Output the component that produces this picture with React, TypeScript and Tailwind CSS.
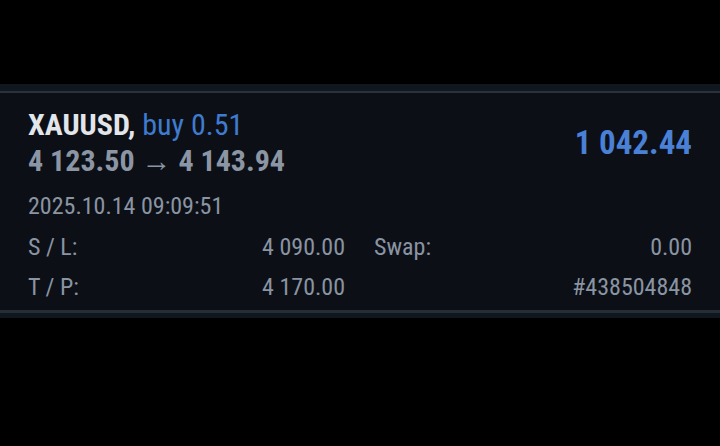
const font = "font-['Roboto_Condensed',Roboto,sans-serif]";

function Field({ label, value }: { label: string; value: string }) {
  return (
    <div className="flex justify-between">
      <span className="text-[#8a94a3]">{label}</span>
      <span className="text-[#8a94a3]">{value}</span>
    </div>
  );
}

export default function App() {
  return (
    <div className={`h-[446px] w-[720px] bg-black ${font}`}>
      <div className="h-[84px]" />
      <div className="h-[7px] bg-[#11171e]" />
      <div className="h-[2px] bg-[#2a323c]" />

      <div className="bg-[#0c1016] pl-[28px] pr-[28px] pt-[14px] pb-[8px]">
        <div className="flex items-center justify-between">
          <div className="font-bold text-[30px] leading-[36px]">
            <div>
              <span className="text-[#e2e5ea]">XAUUSD, </span>
              <span className="font-normal text-[#3f7bd0]">buy 0.51</span>
            </div>
            <div className="text-[#8b95a4]">4 123.50 → 4 143.94</div>
          </div>
          <div className="font-bold text-[33px] leading-[36px] text-[#4a80d6]">1 042.44</div>
        </div>

        <div className="mt-[12px] text-[24px] leading-[30px] text-[#8a94a3]">2025.10.14 09:09:51</div>

        <div className="mt-[11px] grid grid-cols-[317px_1fr] gap-x-[29px] gap-y-[10px] text-[24px] leading-[30px]">
          <Field label="S / L:" value="4 090.00" />
          <Field label="Swap:" value="0.00" />
          <Field label="T / P:" value="4 170.00" />
          <Field label="" value="#438504848" />
        </div>
      </div>

      <div className="h-[3px] bg-[#252d37]" />
      <div className="h-[5px] bg-[#10161d]" />
    </div>
  );
}
